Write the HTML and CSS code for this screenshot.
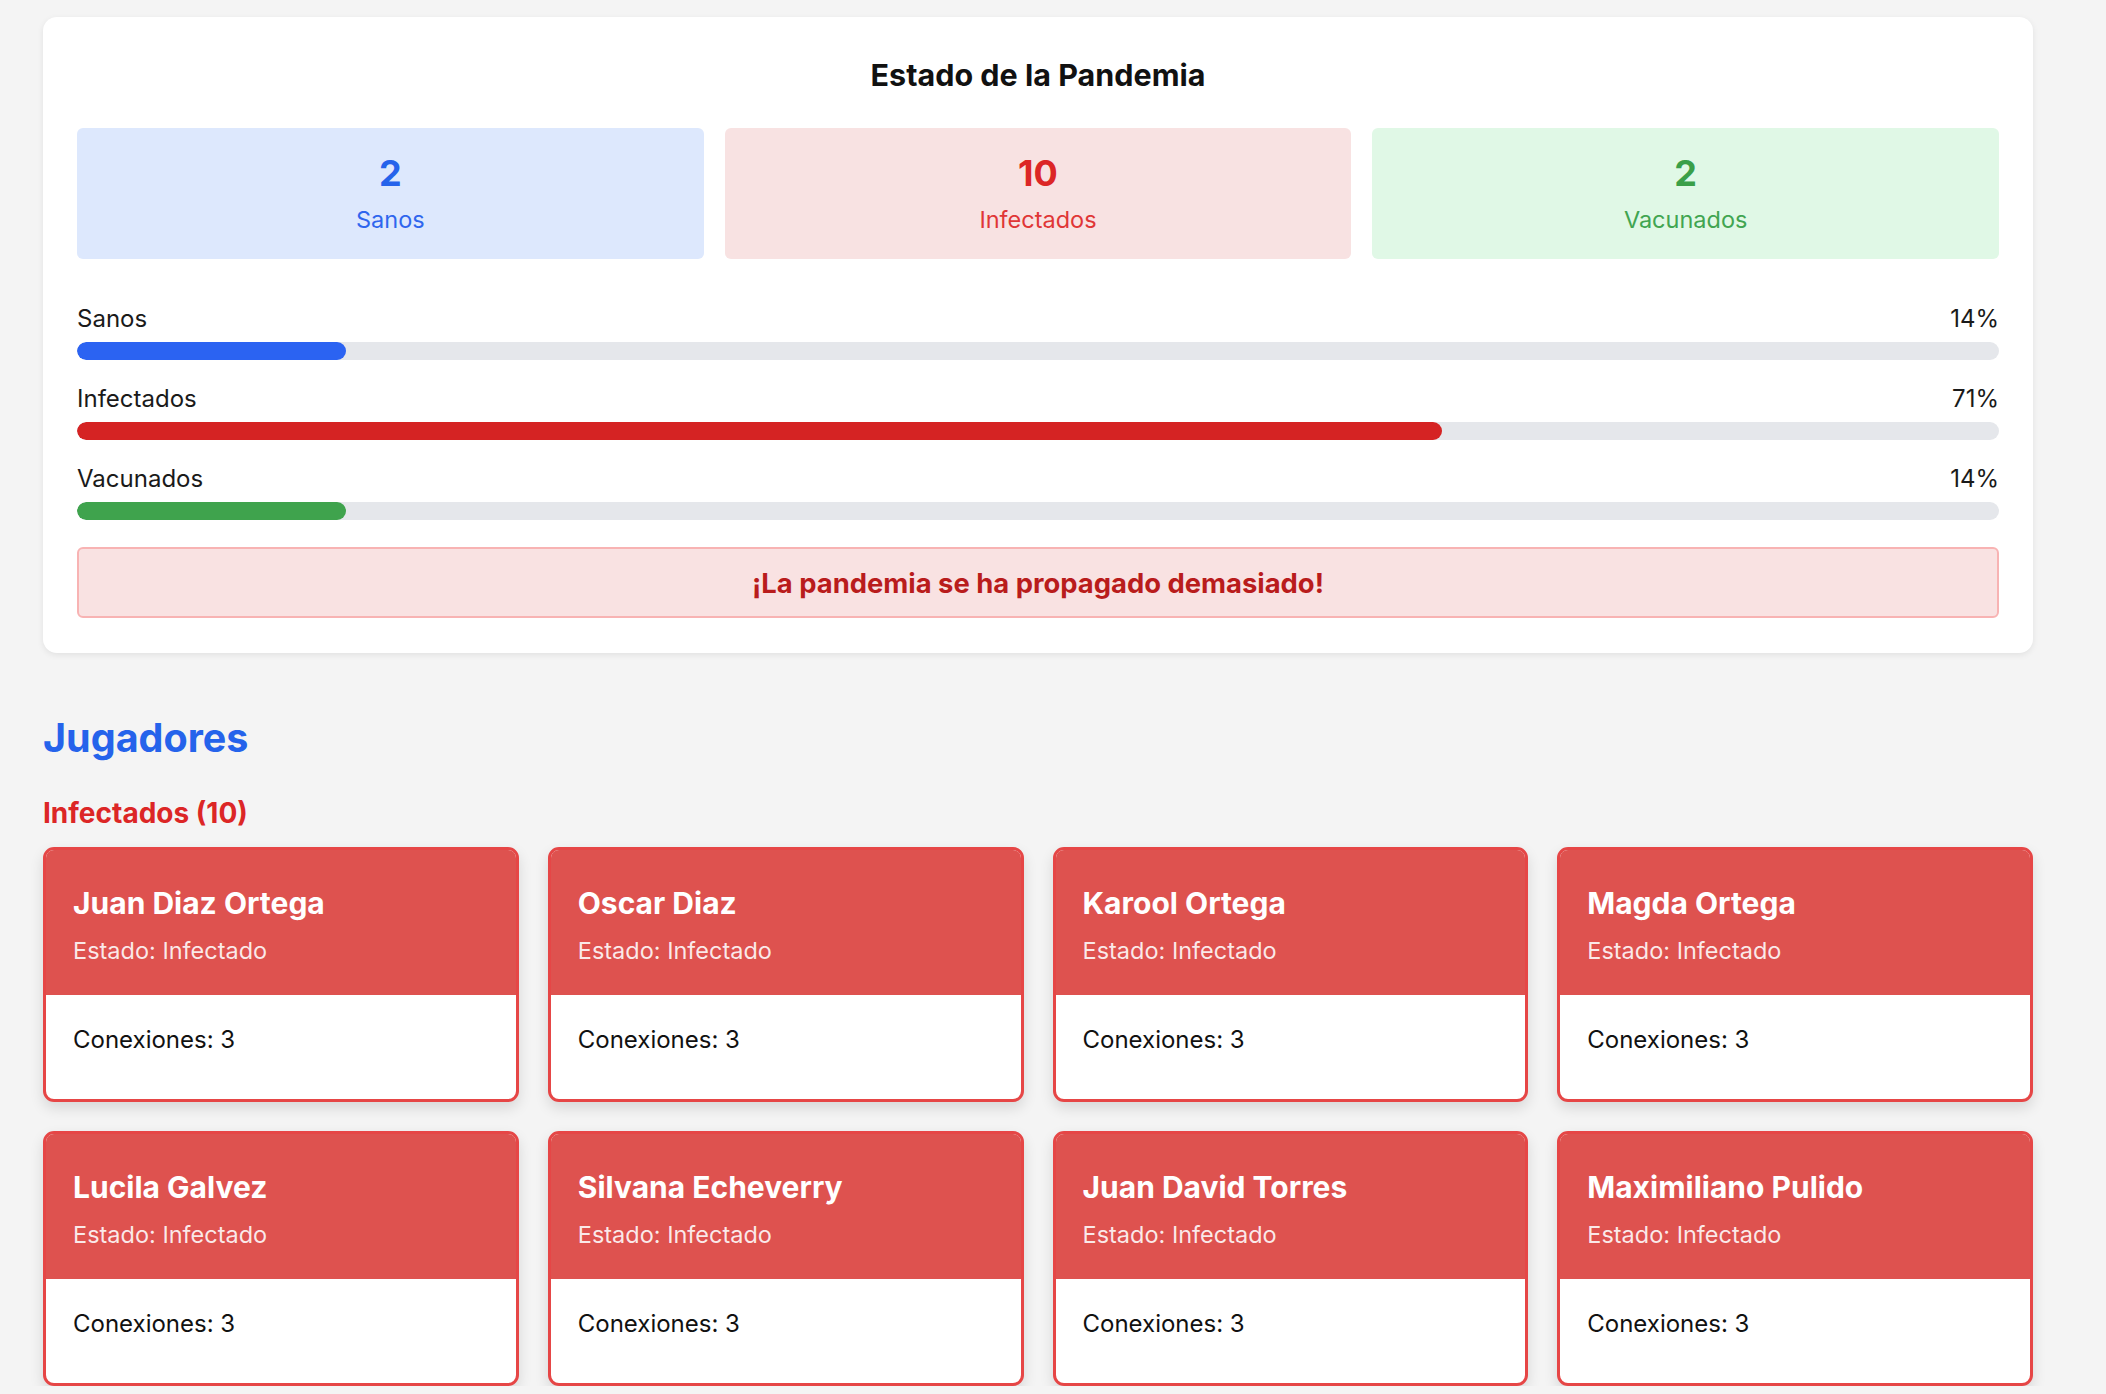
FILE: index.html
```html
<!DOCTYPE html>
<html lang="es">
<head>
<meta charset="utf-8">
<title>Estado de la Pandemia</title>
<link rel="stylesheet" href="styles.css">
</head>
<body>
<main class="page">
  <section class="panel">
    <h1 class="panel-title">Estado de la Pandemia</h1>
    <div class="stats">
      <div class="stat stat-blue"><div class="stat-num">2</div><div class="stat-label">Sanos</div></div>
      <div class="stat stat-red"><div class="stat-num">10</div><div class="stat-label">Infectados</div></div>
      <div class="stat stat-green"><div class="stat-num">2</div><div class="stat-label">Vacunados</div></div>
    </div>
    <div class="bars">
      <div class="bar-row">
        <div class="bar-head"><span>Sanos</span><span>14%</span></div>
        <div class="track"><div class="fill fill-blue" style="width:14%"></div></div>
      </div>
      <div class="bar-row">
        <div class="bar-head"><span>Infectados</span><span>71%</span></div>
        <div class="track"><div class="fill fill-red" style="width:71%"></div></div>
      </div>
      <div class="bar-row">
        <div class="bar-head"><span>Vacunados</span><span>14%</span></div>
        <div class="track"><div class="fill fill-green" style="width:14%"></div></div>
      </div>
    </div>
    <div class="alert">¡La pandemia se ha propagado demasiado!</div>
  </section>

  <h2 class="players-title">Jugadores</h2>
  <h3 class="group-title">Infectados (10)</h3>
  <div class="cards">
    <div class="card"><div class="card-head"><div class="card-name">Juan Diaz Ortega</div><div class="card-state">Estado: Infectado</div></div><div class="card-body">Conexiones: 3</div></div>
    <div class="card"><div class="card-head"><div class="card-name">Oscar Diaz</div><div class="card-state">Estado: Infectado</div></div><div class="card-body">Conexiones: 3</div></div>
    <div class="card"><div class="card-head"><div class="card-name">Karool Ortega</div><div class="card-state">Estado: Infectado</div></div><div class="card-body">Conexiones: 3</div></div>
    <div class="card"><div class="card-head"><div class="card-name">Magda Ortega</div><div class="card-state">Estado: Infectado</div></div><div class="card-body">Conexiones: 3</div></div>
    <div class="card"><div class="card-head"><div class="card-name">Lucila Galvez</div><div class="card-state">Estado: Infectado</div></div><div class="card-body">Conexiones: 3</div></div>
    <div class="card"><div class="card-head"><div class="card-name">Silvana Echeverry</div><div class="card-state">Estado: Infectado</div></div><div class="card-body">Conexiones: 3</div></div>
    <div class="card"><div class="card-head"><div class="card-name">Juan David Torres</div><div class="card-state">Estado: Infectado</div></div><div class="card-body">Conexiones: 3</div></div>
    <div class="card"><div class="card-head"><div class="card-name">Maximiliano Pulido</div><div class="card-state">Estado: Infectado</div></div><div class="card-body">Conexiones: 3</div></div>
  </div>
</main>
</body>
</html>
```
FILE: styles.css
```css
* { box-sizing: border-box; }
html, body { margin: 0; padding: 0; }
body {
  background: #f4f4f4;
  font-family: Inter, "Noto Sans", "Liberation Sans", sans-serif;
  color: #111;
}
.page {
  width: 1990px;
  margin-left: 43px;
  padding-top: 17px;
}
.panel {
  background: #fff;
  border-radius: 14px;
  box-shadow: 0 2px 6px rgba(0,0,0,0.08);
  padding: 38px 34px 35px;
}
.panel-title {
  margin: 0 0 33px;
  font-size: 30.5px;
  line-height: 40px;
  font-weight: 700;
  text-align: center;
  color: #111;
}
.stats {
  display: grid;
  grid-template-columns: repeat(3, 1fr);
  gap: 21px;
}
.stat {
  height: 131px;
  border-radius: 6px;
  display: flex;
  flex-direction: column;
  align-items: center;
  padding-top: 23px;
}
.stat-num { font-size: 36px; line-height: 44px; font-weight: 700; }
.stat-label { font-size: 23.5px; line-height: 32px; margin-top: 9px; }
.stat-blue { background: #dde8fd; color: #2563eb; }
.stat-blue .stat-label { color: #2f66ee; }
.stat-red { background: #f8e2e2; color: #dc2626; }
.stat-red .stat-label { color: #e03636; }
.stat-green { background: #e0f8e6; color: #3a9f48; }
.stat-green .stat-label { color: #41a551; }

.bars { margin-top: 45px; }
.bar-row { margin-bottom: 24px; }
.bar-row:last-child { margin-bottom: 0; }
.bar-head {
  display: flex;
  justify-content: space-between;
  font-size: 24px;
  line-height: 30px;
  color: #1a1a1a;
  margin-bottom: 8px;
}
.track {
  height: 18px;
  background: #e5e7eb;
  border-radius: 9px;
  overflow: hidden;
}
.fill { height: 100%; border-radius: 9px; }
.fill-blue { background: #2b63f2; }
.fill-red { background: #d52323; }
.fill-green { background: #3fa34d; }

.alert {
  margin-top: 27px;
  height: 71px;
  border: 2px solid #f8b3b3;
  background: #f9e2e2;
  border-radius: 6px;
  display: flex;
  align-items: center;
  justify-content: center;
  font-size: 27.4px;
  font-weight: 700;
  color: #b91c1c;
}

.players-title {
  margin: 61px 0 0;
  font-size: 39.5px;
  line-height: 48px;
  font-weight: 700;
  color: #2563eb;
}
.group-title {
  margin: 34px 0 0;
  font-size: 28px;
  line-height: 34px;
  font-weight: 700;
  color: #dc2626;
}
.cards {
  margin-top: 17px;
  display: grid;
  grid-template-columns: repeat(4, 1fr);
  gap: 29px;
}
.card {
  border: 3px solid #e64646;
  border-radius: 11px;
  overflow: hidden;
  background: #fff;
  box-shadow: 0 6px 14px rgba(0,0,0,0.12);
}
.card-head {
  background: #de524f;
  color: #fff;
  padding: 35px 27px 29px;
}
.card-name { font-size: 30px; line-height: 36px; font-weight: 700; }
.card-state { font-size: 23.5px; line-height: 30px; margin-top: 15px; color: rgba(255,255,255,0.88); }
.card-body {
  padding: 30px 27px 44px;
  font-size: 24px;
  line-height: 30px;
  color: #111;
}
```
